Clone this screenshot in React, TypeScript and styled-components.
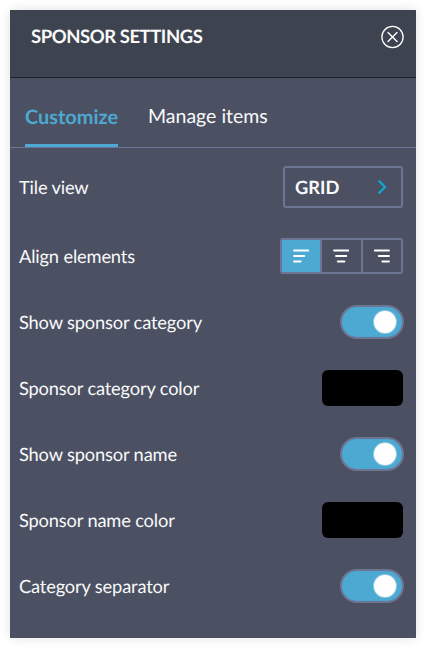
import React, { FunctionComponent, ReactNode, useState } from "react"
import styled, { createGlobalStyle } from "styled-components"

const colors = {
    header: "#3d4450",
    panel: "#4b5163",
    border: "#6c7694",
    accent: "#4ca9d2",
    text: "#fafafa",
}

const GlobalStyle = createGlobalStyle`
    * {
        box-sizing: border-box;
    }

    body {
        margin: 0;
        background: #fff;
        font-family: Lato, sans-serif;
        color: ${colors.text};
        text-rendering: geometricPrecision;
    }

    button {
        margin: 0;
        padding: 0;
        border: 0;
        background: none;
        color: inherit;
        font: inherit;
        text-rendering: inherit;
        cursor: pointer;
    }
`

const Panel = styled.section`
    width: 406px;
    height: 628px;
    margin: 10px;
    background: ${colors.panel};
    box-shadow: 0 0 10px rgba(0, 0, 0, 0.12);
`

const Header = styled.header`
    display: flex;
    align-items: flex-start;
    justify-content: space-between;
    height: 68px;
    padding: 15px 12px 0 21px;
    background: ${colors.header};
    border-bottom: 1px solid #1d222b;
`

const Title = styled.h1`
    margin: 0;
    font-size: 18.5px;
    font-weight: 700;
    line-height: 23px;
    letter-spacing: -0.45px;
`

const CloseButton = styled.button`
    display: flex;
`

const Tabs = styled.nav`
    display: flex;
    gap: 30px;
    height: 70px;
    padding-left: 15px;
    border-bottom: 1px solid ${colors.border};
`

const Tab = styled.button<{ $active?: boolean }>`
    height: 69px;
    padding-top: 12px;
    font-size: ${props => (props.$active ? 19.9 : 19.5)}px;
    line-height: 24px;
    font-weight: ${props => (props.$active ? 700 : 400)};
    color: ${props => (props.$active ? colors.accent : colors.text)};
    border-bottom: 3px solid
        ${props => (props.$active ? colors.accent : "transparent")};
`

const Settings = styled.div`
    padding: 3px 13px 0 9px;
`

const Row = styled.div<{ $height?: number }>`
    display: flex;
    align-items: center;
    justify-content: space-between;
    height: ${props => props.$height || 66}px;
`

const Label = styled.span`
    font-size: 18.3px;
    line-height: 22px;
    letter-spacing: -0.17px;
`

const Select = styled.button`
    display: flex;
    align-items: center;
    justify-content: space-between;
    width: 120px;
    height: 42px;
    padding: 0 14px 0 10px;
    border: 2px solid ${colors.border};
    border-radius: 3px;
    font-size: 18.3px;
    font-weight: 700;
`

const AlignGroup = styled.div`
    display: flex;
    width: 123px;
    height: 36px;
    border: 2px solid ${colors.border};
    border-radius: 3px;
`

const AlignButton = styled.button<{ $active: boolean }>`
    display: flex;
    flex: 1;
    align-items: center;
    justify-content: center;
    background: ${props => (props.$active ? colors.accent : "transparent")};

    & + & {
        border-left: 2px solid ${colors.border};
    }
`

const Switch = styled.button<{ $on: boolean }>`
    display: flex;
    align-items: center;
    justify-content: ${props => (props.$on ? "flex-end" : "flex-start")};
    width: 64px;
    height: 34px;
    margin-right: -1px;
    padding: 0 6px;
    border: 2px solid ${colors.border};
    border-radius: 17px;
    background: ${props => (props.$on ? colors.accent : colors.header)};
`

const Knob = styled.span`
    width: 22px;
    height: 22px;
    border-radius: 50%;
    background: #fff;
    box-shadow: 0 0 0 1px rgba(255, 255, 255, 0.4);
`

const Swatch = styled.button<{ $color: string }>`
    width: 81px;
    height: 36px;
    border-radius: 6px;
    background: ${props => props.$color};
`

const CloseIcon = () => (
    <svg width="23" height="24" viewBox="0 0 23 24" fill="none" stroke="#fff">
        <circle cx="11.5" cy="12" r="10.6" strokeWidth="1.3" />
        <path
            d="M7 7.5 L16 16.5 M16 7.5 L7 16.5"
            strokeWidth="1.4"
            strokeLinecap="round"
        />
    </svg>
)

const ChevronIcon = () => (
    <svg width="10" height="16" viewBox="0 0 10 16" fill="none">
        <path d="M1.7 1.6 L8 8 L1.7 14.4" stroke="#12a5cb" strokeWidth="2.3" />
    </svg>
)

const alignPaths = {
    left: "M1 1.5 H15.3 M1 7 H11.3 M1 12.5 H7.7",
    center: "M1 1.5 H15.3 M3 7 H13.3 M4.8 12.5 H11.5",
    right: "M0.7 1.5 H15 M4.7 7 H15 M8.3 12.5 H15",
}

type Align = keyof typeof alignPaths

const AlignIcon: FunctionComponent<{ align: Align }> = ({ align }) => (
    <svg width="16" height="14" viewBox="0 0 16 14">
        <path
            d={alignPaths[align]}
            stroke="#fff"
            strokeWidth="1.8"
            strokeLinecap="round"
        />
    </svg>
)

interface ISettingProps {
    label: string
    height?: number
    children: ReactNode
}

const Setting: FunctionComponent<ISettingProps> = ({
    label,
    height,
    children,
}) => (
    <Row $height={height}>
        <Label>{label}</Label>
        {children}
    </Row>
)

const Toggle: FunctionComponent<{ label: string }> = ({ label }) => {
    const [on, setOn] = useState(true)

    return (
        <Switch
            role="switch"
            aria-checked={on}
            aria-label={label}
            $on={on}
            onClick={() => setOn(!on)}
        >
            <Knob />
        </Switch>
    )
}

const App: FunctionComponent = () => {
    const [align, setAlign] = useState<Align>("left")

    return (
        <>
            <GlobalStyle />
            <Panel>
                <Header>
                    <Title>SPONSOR SETTINGS</Title>
                    <CloseButton aria-label="Close">
                        <CloseIcon />
                    </CloseButton>
                </Header>
                <Tabs>
                    <Tab $active>Customize</Tab>
                    <Tab>Manage items</Tab>
                </Tabs>
                <Settings>
                    <Setting label="Tile view" height={72}>
                        <Select>
                            GRID
                            <ChevronIcon />
                        </Select>
                    </Setting>
                    <Setting label="Align elements">
                        <AlignGroup>
                            {(Object.keys(alignPaths) as Align[]).map(name => (
                                <AlignButton
                                    key={name}
                                    aria-label={name}
                                    $active={name === align}
                                    onClick={() => setAlign(name)}
                                >
                                    <AlignIcon align={name} />
                                </AlignButton>
                            ))}
                        </AlignGroup>
                    </Setting>
                    <Setting label="Show sponsor category">
                        <Toggle label="Show sponsor category" />
                    </Setting>
                    <Setting label="Sponsor category color">
                        <Swatch $color="#000" aria-label="Category color" />
                    </Setting>
                    <Setting label="Show sponsor name">
                        <Toggle label="Show sponsor name" />
                    </Setting>
                    <Setting label="Sponsor name color">
                        <Swatch $color="#000" aria-label="Name color" />
                    </Setting>
                    <Setting label="Category separator">
                        <Toggle label="Category separator" />
                    </Setting>
                </Settings>
            </Panel>
        </>
    )
}

export default App
